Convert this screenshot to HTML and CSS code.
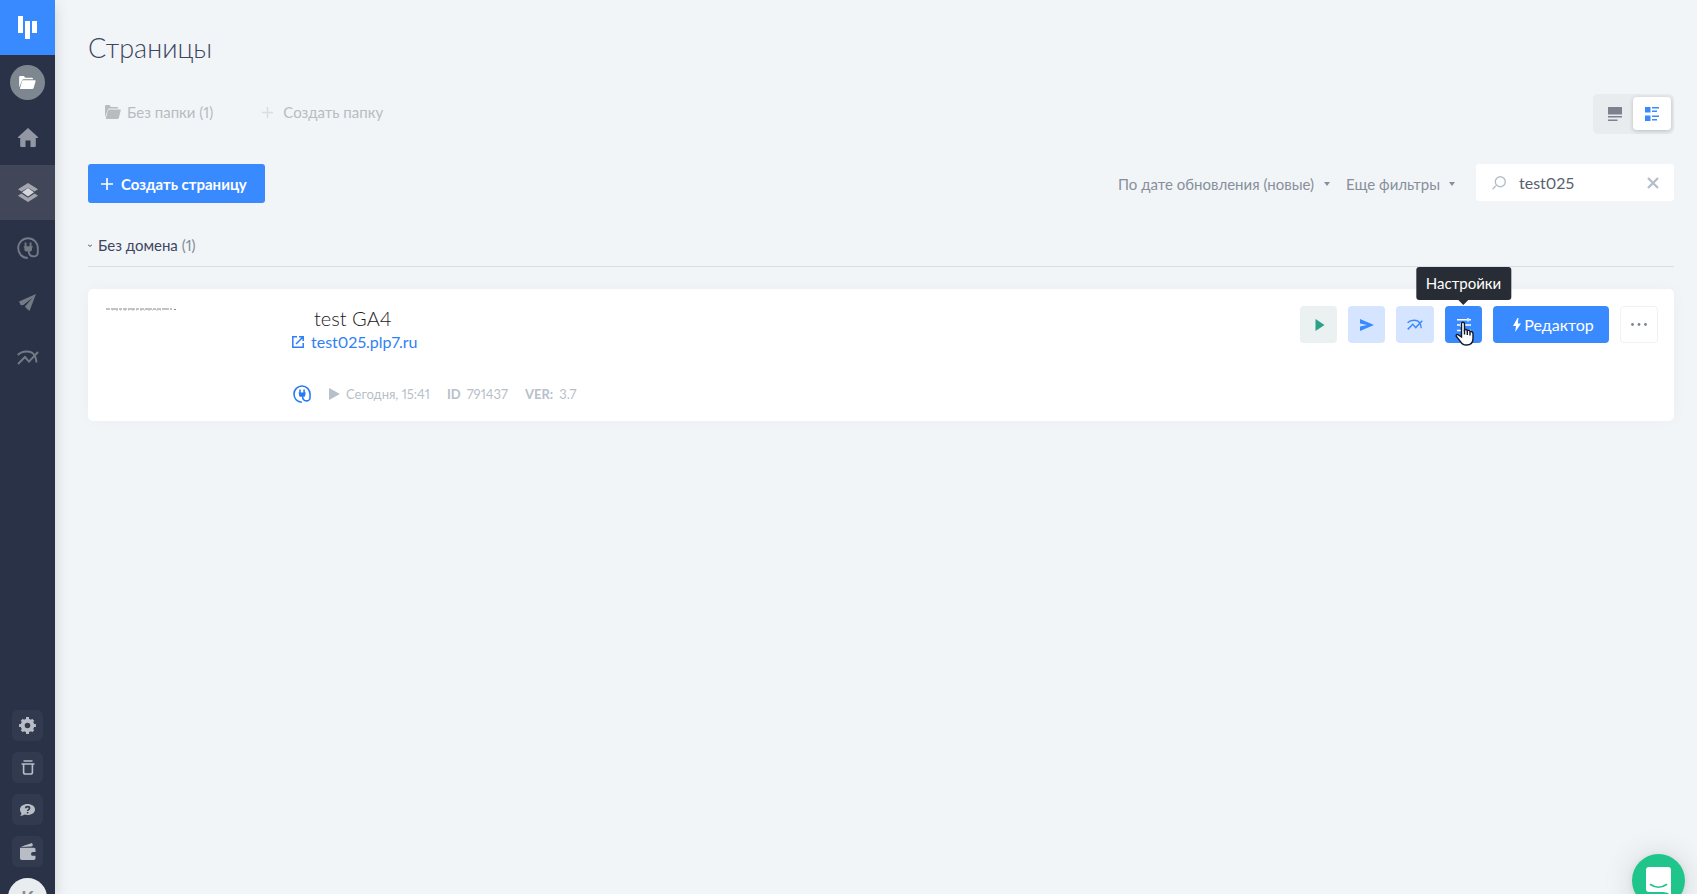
FILE: index.html
```html
<!DOCTYPE html>
<html lang="ru">
<head>
<meta charset="utf-8">
<title>Страницы</title>
<link rel="stylesheet" href="styles.css">
</head>
<body>
<svg class="sprite" aria-hidden="true">
  <symbol id="folder" viewBox="0 0 18 14"><path d="M0 12.500V1.200Q0 0 1.200 0H5l1.700 2H13.500Q15 2 15 3.300V3.600H5Q3.600 3.600 3 5L0 12.500Z"/><path d="M4.200 4.600H17Q18 4.600 17.700 5.600L15.600 12.800Q15.200 14 14 14H1.600Q.6 14 1 12.900L3.200 5.400Q3.500 4.600 4.200 4.600Z"/></symbol>
  <symbol id="plug" viewBox="0 0 22 22"><path d="M10.800 21C5 20.800 1.200 16.500 1.200 11a9.800 9.800 0 1 1 19.600 0v4.500a3.700 3.700 0 0 1-3.900 3.900c-3.600 0-5.200-2.400-5.200-5.700" fill="none" stroke="currentColor" stroke-width="1.900"/><path d="M7.600 5.500h1.900v3.700h3.100V5.500h1.900v3.700h1.200v1.300h-.7v2.200q0 1.700-1.800 1.700H9.200q-1.800 0-1.800-1.700v-2.200h-.6V9.200h.8Z"/></symbol>
  <symbol id="chart" viewBox="0 0 22 16"><g fill="none" stroke="currentColor" stroke-width="2"><path d="M.8 5C5 .4 14.500 0 17.500 5.200 19 7.800 19.400 9.800 19.500 12.500"/><path d="M1 14l7-7 4 4.600 9-9.600"/></g></symbol>
  <symbol id="plus" viewBox="0 0 12 12"><path d="M6 0v12M0 6h12" fill="none" stroke="currentColor" stroke-width="1.600"/></symbol>
  <symbol id="caret" viewBox="0 0 6 4"><path d="M0 0h6L3 4Z"/></symbol>
</svg>
<div class="app">
  <aside class="sidebar">
    <a class="logo" href="#" aria-label="Главная"><svg width="19" height="23" viewBox="0 0 19 23"><path d="M0 0h5v17H0ZM7 5h5v18H7ZM14 5h5v12h-5Z"/></svg></a>
    <nav class="nav">
      <a href="#" class="nav-item" aria-label="Папки"><span class="nav-round"><svg width="17" height="13"><use href="#folder"/></svg></span></a>
      <a href="#" class="nav-item home" aria-label="Дом"><svg width="20" height="19" viewBox="0 0 20 19"><path d="M10 0 20 9v1h-2.200v8q0 1-1 1H12.500v-6.500h-5V19H3.200q-1 0-1-1v-8H0V9Z"/></svg></a>
      <a href="#" class="nav-item active" aria-label="Страницы"><svg width="20" height="19" viewBox="0 0 20 19"><path class="layer" d="M10 0 20 6.300 16.500 8.500 10 4.700 3.500 8.500 0 6.300ZM0 12.700l3.300-2.200L10 14.700l6.700-4.200L20 12.700 10 19Z"/><path class="light" d="M10 5 16 9.200 10 13.500 4 9.200Z"/></svg></a>
      <a href="#" class="nav-item" aria-label="Интеграции"><svg width="22" height="22"><use href="#plug"/></svg></a>
      <a href="#" class="nav-item" aria-label="Рассылки"><svg width="17" height="17" viewBox="0 0 17 17"><path d="M17 0 0 7.500l1.700 3.700 2.800-.2L13.500 3.700 6 12.500l1 1.500L10.500 17Z"/></svg></a>
      <a href="#" class="nav-item" aria-label="Статистика"><svg width="22" height="16"><use href="#chart"/></svg></a>
    </nav>
    <div class="tools">
      <button class="tool" aria-label="Настройки аккаунта"><svg width="17" height="17" viewBox="-8.500 -8.500 17 17"><circle r="4.800" fill="none" stroke="currentColor" stroke-width="4"/><path d="M0-8.400V8.400M-8.400 0H8.400M-5.700-5.700 5.700 5.700M-5.700 5.700 5.700-5.700" stroke="currentColor" stroke-width="3" stroke-dasharray="3 10.800 3 0"/></svg></button>
      <button class="tool" aria-label="Корзина"><svg width="14" height="15" viewBox="0 0 14 15"><path d="M2.500 1h9M.5 4h13M2.600 4v8.200q0 1.800 1.800 1.800h5.200q1.800 0 1.800-1.800V4" fill="none" stroke="currentColor" stroke-width="1.600"/></svg></button>
      <button class="tool" aria-label="Помощь"><svg width="15" height="12" viewBox="0 0 15 12"><path d="M7.500 0C11.600 0 15 2.300 15 5.500S11.600 11 7.500 11c-1 0-2-.1-2.900-.4Q2.500 12 .2 12q1-1 1.300-2.800C.5 8.200 0 7 0 5.500 0 2.300 3.400 0 7.500 0Z"/><path d="M5.700 4.300c0-2.200 3.900-2.200 3.900 0 0 1.400-2 1.300-2 2.700M7.600 8v1.400" class="question"/></svg></button>
      <button class="tool" aria-label="Кошелёк"><svg width="16" height="17" viewBox="0 0 16 17"><path d="M1 4Q2 3 12 0l1 2.300-1.500 1.200Z"/><path d="M0 4.800h14q1.500 0 1.500 1.500V9H13q-2 0-2 1.900t2 1.900h2.500v2.400q0 1.800-1.800 1.800H1.800Q0 17 0 15.200Z"/></svg></button>
      <button class="avatar">K</button>
    </div>
  </aside>

  <main class="main">
    <h1 class="title">Страницы</h1>
    <div class="folders">
      <button class="folder"><svg width="16" height="14" viewBox="0 0 18 14" preserveAspectRatio="none"><use href="#folder"/></svg>Без папки (1)</button>
      <button class="folder add"><svg width="11" height="11"><use href="#plus"/></svg>Создать папку</button>
      <div class="view">
        <button class="view-btn" aria-label="Плитка"><svg width="14" height="14" viewBox="0 0 14 14"><path d="M0 0h14v7.500H0ZM0 9h14v1.500H0ZM0 12.500h9.500V14H0Z"/></svg></button>
        <button class="view-btn selected" aria-label="Список"><svg width="14" height="14" viewBox="0 0 14 14"><path d="M0 0h5.500v5.500H0ZM0 8.500h5.500V14H0ZM7 0h7v1.500H7ZM7 3.500h5V5H7ZM7 8.500h7V10H7ZM7 12h5v1.500H7Z"/></svg></button>
      </div>
    </div>
    <div class="toolbar">
      <button class="create"><svg width="12" height="12"><use href="#plus"/></svg>Создать страницу</button>
      <div class="filters">
        <label class="filter"><select aria-label="Сортировка"><option>По дате обновления (новые)</option></select><svg width="6" height="4"><use href="#caret"/></svg></label>
        <label class="filter"><select aria-label="Фильтры"><option>Еще фильтры</option></select><svg width="6" height="4"><use href="#caret"/></svg></label>
      </div>
      <div class="search">
        <svg width="14" height="14" viewBox="0 0 14 14"><path d="M3.700 9.800.6 13.200M8.300.8a5 5 0 1 1 0 10 5 5 0 0 1 0-10Z"/></svg>
        <input type="text" value="test025" aria-label="Поиск">
        <button class="clear" aria-label="Очистить"><svg width="12" height="12" viewBox="0 0 12 12"><path d="m1 1 10 10M11 1 1 11"/></svg></button>
      </div>
    </div>
    <section>
      <h2 class="group"><svg width="4" height="3" viewBox="0 0 4 3"><path d="M0 .5 2 2.500 4 .5"/></svg><span>Без домена <span class="count">(1)</span></span></h2>
      <article class="card">
        <div class="thumb"><svg width="70" height="4" viewBox="0 0 70 4"><path d="M0 2h66M68 2.500h2" stroke="#888" stroke-dasharray="4 1 7 1 3 1"/><path d="M6 3h50" stroke="#bbb" stroke-dasharray="1 3 2 2"/></svg></div>
        <div class="info">
          <h3 class="name">test GA4</h3>
          <a class="link" href="#"><svg width="12" height="12" viewBox="0 0 12 12"><path d="M5 .8H.8v10.400h10.400V7M7 .8h4.200V5M11 1 4 8"/></svg>test025.plp7.ru</a>
          <div class="meta">
            <svg class="meta-plug" width="18" height="18"><use href="#plug"/></svg>
            <span class="meta-item date"><svg width="11" height="12" viewBox="0 0 10 11"><path d="M0 0 10 5.500 0 11Z"/></svg>Сегодня, 15:41</span>
            <span class="meta-item"><b>ID</b>791437</span>
            <span class="meta-item"><b>VER:</b>3.7</span>
          </div>
        </div>
        <div class="actions">
          <button class="act play" aria-label="Просмотр"><svg width="10" height="12" viewBox="0 0 9 12"><path d="M0 0 9 6 0 12Z"/></svg></button>
          <button class="act soft" aria-label="Заявки"><svg width="14" height="12" viewBox="0 0 14 12"><path d="M0 0 14 6 0 12V7.500L7 6 0 4.500Z"/></svg></button>
          <button class="act soft stats" aria-label="Статистика страницы"><svg width="16" height="12"><use href="#chart"/></svg></button>
          <div class="tip-wrap">
            <button class="act solid" aria-label="Настройки"><svg width="14" height="14" viewBox="0 0 14 14"><path d="M0 1.800h10M12 1.800h2M11 0v3.600M0 7h3M5 7h9M4 5v4M0 12.400h14" stroke="currentColor" stroke-width="1.500"/></svg></button>
            <div class="tip" role="tooltip">Настройки</div>
            <svg class="cursor" width="19" height="25" viewBox="0 0 19 25"><path d="M6.500 16V3.200Q6.500 1.200 8 1.200T9.500 3.200V9Q11.500 7.800 12.300 9.600 14.500 8.700 15 10.600 18 10 18 13v4.500q0 6.500-6.500 6.500-4.500 0-6-3.500L1.200 15.200Q.8 13.200 3 13.600L6.500 16Z"/><path d="M9.500 9v4.500M12.300 10v4M15 11v3.500" fill="none"/></svg>
          </div>
          <button class="act editor"><svg width="8" height="14" viewBox="0 0 8 14"><path d="M4.500 0 0 8h3l-.8 6L8 5.500H4.800L5.500 0Z"/></svg>Редактор</button>
          <button class="act more" aria-label="Еще"><svg width="16" height="3" viewBox="0 0 16 3"><circle cx="1.500" cy="1.500" r="1.400"/><circle cx="8" cy="1.500" r="1.400"/><circle cx="14.500" cy="1.500" r="1.400"/></svg></button>
        </div>
      </article>
    </section>
  </main>
</div>
<button class="chat" aria-label="Чат"><svg width="25" height="28" viewBox="0 0 25 28"><path d="M3 0h19q3 0 3 3v25q-3.500-3-8-3H3q-3 0-3-3V3Q0 0 3 0Z"/><path d="M4.500 17.500q8 5.500 16 0" class="smile"/></svg></button>
</body>
</html>
```
FILE: styles.css
```css
* { box-sizing: border-box; }
body {
  margin: 0;
  background: #f1f5f8;
  color: #3d4560;
  font: 15px/20px Lato, "Open Sans", sans-serif;
  font-variant-numeric: proportional-nums;
  overflow: hidden;
}
button, input, select { font: inherit; color: inherit; border: 0; margin: 0; padding: 0; background: none; }
button, select { cursor: pointer; }
a { color: inherit; text-decoration: none; }
svg { display: block; flex: none; fill: currentColor; }
.sprite { position: absolute; width: 0; height: 0; }

.app { display: flex; height: 100vh; }
.sidebar {
  width: 55px;
  flex: none;
  display: flex;
  flex-direction: column;
  background: #2a3247;
  box-shadow: 0 5px 14px rgba(0, 0, 0, .14);
}
.logo { height: 55px; display: grid; place-items: center; padding-bottom: 1px; background: #3a8aff; color: #fff; }
.nav-item { height: 55px; display: grid; place-items: center; color: #747986; }
.nav-item.home { color: #9297a3; }
.nav-item.active { background: #414659; color: #fff; }
.nav-round { width: 35px; height: 35px; border-radius: 50%; display: grid; place-items: center; background: #7e878f; color: #fff; }
.layer { fill: #a3a6af; }
.light { fill: #d5d6da; }
.tools { margin: auto 0 -23px; display: flex; flex-direction: column; align-items: center; gap: 11px; }
.tool { width: 31px; height: 31px; border-radius: 6px; display: grid; place-items: center; background: #323a4f; color: #b8bdc5; }
.question { fill: none; stroke: #323a4f; stroke-width: 1.600; }
.avatar { width: 39px; height: 39px; border-radius: 50%; background: #e9edf0; color: #858b94; font-size: 18px; font-weight: 700; }

.main { flex: 1; min-width: 0; padding: 31px 23px 0 33px; }
.title { margin: 0; font-size: 27px; line-height: 34px; font-weight: 300; }
.folders { display: flex; align-items: flex-start; margin-top: 29px; }
.folder { display: flex; align-items: center; gap: 6px; height: 36px; margin-left: 17px; color: #b7bcc0; }
.folder.add { gap: 10px; margin-left: 49px; }
.folder.add svg { color: #d9dde0; }
.view { margin-left: auto; display: flex; padding: 3px; height: 40px; border-radius: 5px; background: #e8ecef; }
.view-btn { width: 37px; height: 33px; border-radius: 4px; display: grid; place-items: center; color: #7d828e; }
.view-btn.selected { width: 38px; background: #fff; color: #3a8aff; box-shadow: 0 1px 4px rgba(0, 0, 0, .2); }

.toolbar { display: flex; align-items: flex-start; margin-top: 30px; }
.create { display: flex; align-items: center; gap: 8px; height: 39px; padding: 0 18px 0 13px; border-radius: 3px; background: #3a8aff; color: #fff; font-weight: 700; }
.filters { margin-left: auto; display: flex; gap: 16px; height: 39px; align-items: center; color: #888f9a; }
.filter { display: flex; align-items: center; gap: 9px; }
.filter select { appearance: none; outline: 0; }
.search { width: 198px; height: 37px; margin-left: 21px; padding: 0 15px 0 16px; display: flex; align-items: center; border-radius: 3px; background: #fff; color: #b5bfca; }
.search path { fill: none; stroke: currentColor; stroke-width: 1.400; }
.search input { flex: 1; min-width: 0; margin-left: 13px; outline: 0; color: #566072; font-size: 16px; }
.search .clear path { stroke-width: 2.400; }

.group { display: flex; align-items: center; gap: 6px; margin: 32px 0 0; padding-bottom: 11px; border-bottom: 1px solid #d9dfe4; font-size: 15px; line-height: 20px; font-weight: 400; }
.group path { fill: none; stroke: currentColor; }
.count { color: #858c98; }
.card { display: flex; align-items: flex-start; margin-top: 22px; padding: 17px 16px 17px 18px; border-radius: 5px; background: #fff; box-shadow: 0 0 16px rgba(40, 60, 90, .03); }
.thumb { width: 186px; padding-top: 1px; }
.name { margin: 0 0 0 22px; font-size: 20px; line-height: 24px; font-weight: 300; color: #1e2024; }
.link { display: flex; align-items: center; gap: 7px; font-size: 16px; line-height: 24px; color: #2f7ff5; }
.link path { fill: none; stroke: currentColor; stroke-width: 1.500; }
.meta { display: flex; align-items: center; margin: 30px 0 0 1px; gap: 17px; font-size: 13px; line-height: 20px; color: #b7bfc9; }
.meta-plug { color: #2579f7; }
.meta-item { display: flex; align-items: center; gap: 6px; }
.date { margin-left: 1px; }
.actions { margin-left: auto; display: flex; gap: 11px; }
.act { width: 37px; height: 37px; border-radius: 4px; display: flex; align-items: center; justify-content: center; }
.play { background: #ebf1f1; color: #2aa287; padding-left: 3px; }
.soft { background: #d6e5ff; color: #3a8aff; }
.stats { width: 38px; }
.solid, .editor { background: #3a8aff; color: #fff; }
.editor { width: 116px; gap: 3px; padding-left: 5px; font-size: 16px; }
.more { width: 38px; border: 1px solid #eff1f3; color: #7e858e; }
.tip-wrap { position: relative; }
.tip { position: absolute; left: 50%; bottom: calc(100% + 6px); transform: translateX(-50%); padding: 6px 10px 7px; border-radius: 3px; background: #282c34; color: #fff; font-size: 15px; line-height: 20px; }
.tip::after { content: ""; position: absolute; left: 50%; top: 100%; margin-left: -5px; border: 5px solid transparent; border-top-color: #282c34; border-bottom: 0; }
.cursor { position: absolute; left: 10px; top: 15px; fill: #fff; stroke: #111a2c; stroke-width: 1.400; }
.chat { position: fixed; right: 12px; bottom: -13px; width: 53px; height: 53px; border-radius: 50%; display: grid; place-items: center; background: #1fc58a; color: #fff; box-shadow: 0 1px 8px rgba(0, 0, 0, .08), 0 2px 32px rgba(0, 0, 0, .14); }
.smile { fill: none; stroke: #1fc58a; stroke-width: 1.600; stroke-linecap: round; }
```
